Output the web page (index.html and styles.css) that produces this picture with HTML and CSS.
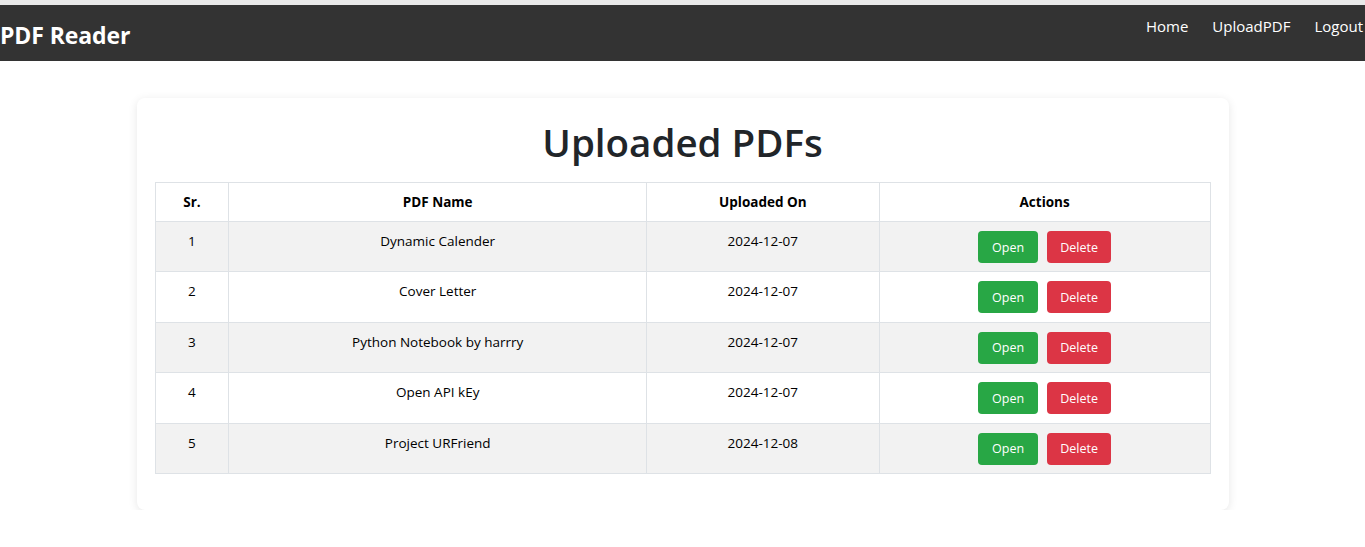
FILE: index.html
```html
<!DOCTYPE html>
<html lang="en">
<head>
<meta charset="utf-8">
<title>PDF Reader</title>
<link rel="stylesheet" href="styles.css">
</head>
<body class="page">
<header class="navbar">
  <div class="brand">PDF Reader</div>
  <nav class="nav-links">
    <a class="nav-link" href="#">Home</a>
    <a class="nav-link" href="#">UploadPDF</a>
    <a class="nav-link" href="#">Logout</a>
  </nav>
</header>
<main class="main">
  <section class="card">
    <h1 class="title">Uploaded PDFs</h1>
    <table class="pdf-table">
      <thead>
        <tr>
          <th class="col-sr">Sr.</th>
          <th class="col-name">PDF Name</th>
          <th class="col-date">Uploaded On</th>
          <th class="col-actions">Actions</th>
        </tr>
      </thead>
      <tbody>
        <tr>
          <td>1</td><td>Dynamic Calender</td><td>2024-12-07</td>
          <td><div class="actions"><button class="btn btn-open">Open</button><button class="btn btn-delete">Delete</button></div></td>
        </tr>
        <tr>
          <td>2</td><td>Cover Letter</td><td>2024-12-07</td>
          <td><div class="actions"><button class="btn btn-open">Open</button><button class="btn btn-delete">Delete</button></div></td>
        </tr>
        <tr>
          <td>3</td><td>Python Notebook by harrry</td><td>2024-12-07</td>
          <td><div class="actions"><button class="btn btn-open">Open</button><button class="btn btn-delete">Delete</button></div></td>
        </tr>
        <tr>
          <td>4</td><td>Open API kEy</td><td>2024-12-07</td>
          <td><div class="actions"><button class="btn btn-open">Open</button><button class="btn btn-delete">Delete</button></div></td>
        </tr>
        <tr>
          <td>5</td><td>Project URFriend</td><td>2024-12-08</td>
          <td><div class="actions"><button class="btn btn-open">Open</button><button class="btn btn-delete">Delete</button></div></td>
        </tr>
      </tbody>
    </table>
  </section>
</main>
</body>
</html>
```

FILE: styles.css
```css
* { box-sizing: border-box; }

.page {
  margin: 0;
  background: #ffffff;
  font-family: "Open Sans", "Noto Sans", "Liberation Sans", sans-serif;
  color: #212529;
  overflow-x: hidden;
}

.navbar {
  display: flex;
  justify-content: space-between;
  align-items: flex-start;
  height: 61px;
  border-top: 5px solid #e9e9e9;
  background: #333333;
  color: #ffffff;
  overflow: hidden;
}

.brand {
  padding-top: 15px;
  font-size: 23px;
  font-weight: 700;
  line-height: 30px;
  letter-spacing: -0.1px;
}

.nav-links {
  display: flex;
  gap: 24px;
  padding-top: 10px;
  margin-right: 2px;
}

.nav-link {
  color: #ffffff;
  text-decoration: none;
  font-size: 15px;
  line-height: 22px;
}

.main {
  padding-top: 37px;
}

.card {
  width: 80%;
  margin: 0 auto;
  padding: 20px 18px 36px;
  background: #ffffff;
  border-radius: 8px;
  box-shadow: 0 2px 10px rgba(0, 0, 0, 0.1);
}

.title {
  margin: 0 0 16px;
  text-align: center;
  font-size: 38.5px;
  font-weight: 600;
  line-height: 48px;
  color: #212529;
}

.pdf-table {
  width: 100%;
  border-collapse: collapse;
  font-size: 13.5px;
  color: #000000;
}

.pdf-table th,
.pdf-table td {
  border: 1px solid #dee2e6;
  text-align: center;
  vertical-align: top;
  line-height: 21px;
}

.pdf-table th {
  padding: 9px 10px 8px;
  font-weight: 700;
}

.pdf-table td {
  padding: 9px 10px 8.4px;
}

.pdf-table tbody tr:nth-child(odd) {
  background: #f2f2f2;
}

.col-sr { width: 74px; }
.col-name { width: 418px; }
.col-date { width: 233px; }
.col-actions { width: 331px; }

.actions {
  display: flex;
  justify-content: center;
  gap: 9px;
}

.btn {
  height: 32px;
  padding: 0;
  border: none;
  border-radius: 4px;
  color: #ffffff;
  font-family: inherit;
  font-size: 12.5px;
  cursor: pointer;
}

.btn-open { background: #28a745; width: 60px; }
.btn-delete { background: #dc3545; width: 64px; }
```
